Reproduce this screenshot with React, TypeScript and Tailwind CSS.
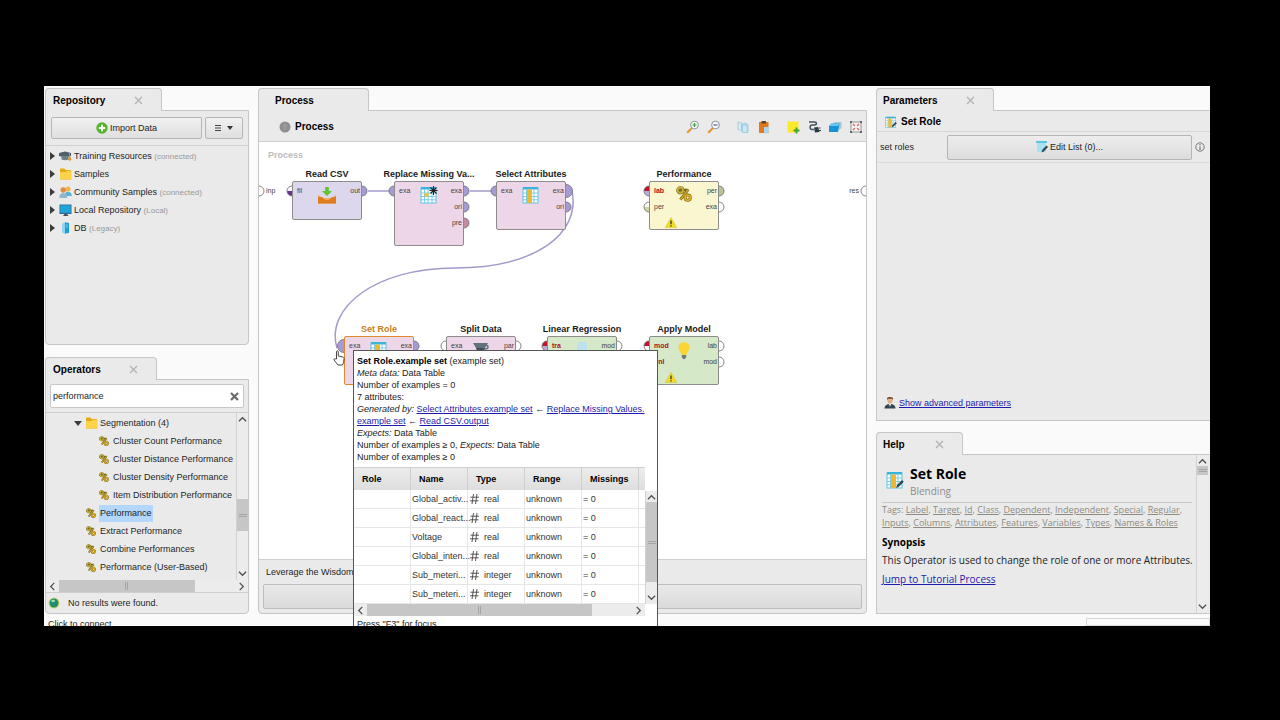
import { useState } from 'react'
import type { ReactNode } from 'react'

type Fill = string | [string, string]

interface Port {
  label: string
  fill: Fill
  bold?: boolean
  big?: boolean
}

interface OperatorNode {
  name: string
  x: number
  y: number
  height: number
  color: string
  selected?: boolean
  warning?: boolean
  inputs: Port[]
  outputs: Port[]
  icon: ReactNode
}

const LILAC = '#a79bd6'
const WHITE = '#ffffff'
const RED = '#c8102e'

/* ---------- icons ---------- */

function CloseIcon({ dark = false }: { dark?: boolean }) {
  return (
    <svg viewBox="0 0 9 9" className="size-[9px]">
      <path d="M1 1l7 7M8 1l-7 7" stroke={dark ? '#6a6a6a' : '#b4b4b4'} strokeWidth={dark ? 2.2 : 1.4} />
    </svg>
  )
}

function PlusIcon() {
  return (
    <svg viewBox="0 0 12 12" className="size-3">
      <circle cx="6" cy="6" r="5.7" fill="#55b52a" />
      <path d="M6 2.8v6.4M2.8 6h6.4" stroke="#fff" strokeWidth="2" />
    </svg>
  )
}

function GraduationIcon() {
  return (
    <svg viewBox="0 0 13 12" className="h-3 w-[13px]">
      <path d="M0 3l6-1.500L12 3v3L6 7.500 0 6z" fill="#4d6068" />
      <path d="M2.500 6v3.500c2 1 5 1 7 0V6z" fill="#6b8088" />
      <path d="M10.500 3v3.500M10.500 6l-1 4h2.500z" stroke="#d9902c" fill="#e9a23b" />
    </svg>
  )
}

function FolderIcon() {
  return (
    <svg viewBox="0 0 13 12" className="h-3 w-[13px]">
      <path d="M1 .5h4.500l1 1.500H12v9.500H1z" fill="#e3ac16" />
      <path d="M1 4h6l1-1.200h4.500v8.700H1z" fill="#fbd249" />
    </svg>
  )
}

function PeopleIcon() {
  return (
    <svg viewBox="0 0 13 12" className="h-3 w-[13px]">
      <circle cx="9" cy="3" r="2.600" fill="#f0b54d" />
      <path d="M5.500 10c0-3 1.500-4.200 3.500-4.200s3.800 1.200 3.800 4.200z" fill="#5ab2da" />
      <circle cx="4.200" cy="4" r="2.700" fill="#e08c3c" />
      <path d="M.3 12c0-3.500 1.600-5 4-5s4 1.500 4 5z" fill="#8fb9cd" />
    </svg>
  )
}

function MonitorIcon() {
  return (
    <svg viewBox="0 0 13 12" className="h-3 w-[13px]">
      <rect x=".5" y=".5" width="12" height="9.500" fill="#2a6f93" />
      <rect x="1.300" y="1.300" width="10.400" height="7.500" fill="#1fa4dc" />
      <path d="M4 12h5.500L8 10H5.500z" fill="#44515a" />
    </svg>
  )
}

function DatabaseIcon() {
  return (
    <svg viewBox="0 0 13 12" className="h-3 w-[13px]">
      <path d="M3 1.500L6 .2v11.600l-3-1z" fill="#8ed4f4" />
      <path d="M6 .2l4 .8v9.800l-4 1z" fill="#1e9bdb" />
      <path d="M6.800 3l2 .3M6.800 5l2 .2" stroke="#c9ecfb" strokeWidth=".7" />
    </svg>
  )
}

function PercentIcon({ size = 'size-[10px]' }: { size?: string }) {
  return (
    <svg viewBox="0 0 14 14" className={size} fill="none">
      <path d="M1.500 3.500h8.800M10.800 3L3.800 12" stroke="#77681c" strokeWidth="2.400" />
      <circle cx="3.800" cy="3.800" r="2.300" stroke="#77681c" strokeWidth="2.600" />
      <circle cx="10.200" cy="10.200" r="2.300" stroke="#77681c" strokeWidth="2.600" />
      <path d="M10.800 3L3.800 12" stroke="#d3a82a" strokeWidth="1.200" />
      <circle cx="3.800" cy="3.800" r="2.300" stroke="#c9b33a" strokeWidth="1.500" />
      <circle cx="10.200" cy="10.200" r="2.300" stroke="#e3ae22" strokeWidth="1.500" />
    </svg>
  )
}

function GridIcon({ size = 'size-4', mark, pen, cell }: { size?: string; mark?: boolean; pen?: boolean; cell?: boolean }) {
  return (
    <svg viewBox="0 0 18 18" className={size}>
      <rect x="1" y="2" width="15" height="15" fill="#fff" stroke="#5cc3e2" />
      <rect x="1" y="1" width="15" height="2.500" fill="#3bb4dc" />
      <path d="M1 7h15M1 10.500h15M1 13.800h15M4.500 3v14M8 3v14M12 3v14" stroke="#6ccae6" strokeWidth=".9" />
      {cell ? (
        <rect x="4.500" y="7" width="4" height="3.500" fill="#f2c230" />
      ) : (
        <rect x="5" y="3.500" width="5" height="13.500" fill="#f0b92d" />
      )}
      {mark && <path d="M13.500 0v9M9.500 4.500h8M10.500 1.500l6 6M16.500 1.500l-6 6" stroke="#222" strokeWidth="1.100" />}
      {pen && <path d="M10 17l1-3 5-5 1.800 1.800-5 5z" fill="#2f4757" />}
    </svg>
  )
}

function ImportTrayIcon() {
  return (
    <svg viewBox="0 0 20 19" className="h-[19px] w-5">
      <path d="M8.200 1h3.600v4H15l-5 5-5-5h3.200z" fill="#5cc531" />
      <path d="M1 9l4 3h10l4-3v8.500H1z" fill="#f3a85a" />
      <path d="M1 10.500l5 1c1 3.500 7 3.500 8 0l5-1v7H1z" fill="#e07c1e" />
    </svg>
  )
}

function FunnelIcon() {
  return (
    <svg viewBox="0 0 18 16" className="h-4 w-[18px]">
      <path d="M1 2h15l-3 5H4z" fill="#62707a" />
      <path d="M4 7h9l-2 6H6z" fill="#424e57" />
      <path d="M13 4c4 0 4 4 0 4" stroke="#62707a" fill="none" strokeWidth="1.500" />
    </svg>
  )
}

function BulbIcon() {
  return (
    <svg viewBox="0 0 14 20" className="h-5 w-3.5">
      <path d="M7 1a5.500 5.500 0 0 1 5.500 5.500c0 3-2.500 4-3 7.500h-5c-.5-3.500-3-4.500-3-7.500A5.500 5.500 0 0 1 7 1z" fill="#fbd534" />
      <path d="M4.800 14h4.400v2.500L7 18.500l-2.200-2z" fill="#6e7b80" />
    </svg>
  )
}

function WarningIcon() {
  return (
    <svg viewBox="0 0 12 11" className="h-[11px] w-3">
      <path d="M6 .5L11.700 10.500H.3z" fill="#f4dc26" stroke="#d9bd1e" strokeWidth=".5" />
      <path d="M6 3.500v3.700M6 8.200v1.300" stroke="#333" strokeWidth="1.300" />
    </svg>
  )
}

function EditIcon() {
  return (
    <svg viewBox="0 0 12 12" className="size-3">
      <rect x="1" y="1" width="9" height="10" fill="#a8e1f2" />
      <rect x="0" y="0" width="11" height="2" fill="#5cc3e2" />
      <path d="M5.500 11.500l.8-2.700L10.500 4.500 12 6l-4.200 4.500z" fill="#2f4757" />
    </svg>
  )
}

function ZoomIcon({ minus = false }: { minus?: boolean }) {
  return (
    <svg viewBox="0 0 14 14" className="size-3.5">
      <path d="M1.200 12.800L6 8" stroke="#e2952c" strokeWidth="2" />
      <circle cx="8.500" cy="5" r="3.900" fill="#f4f8f8" stroke="#8a979c" strokeWidth="1" />
      <path d={minus ? 'M6.500 5h4' : 'M6.500 5h4M8.500 3v4'} stroke={minus ? '#70569c' : '#3f9b3a'} strokeWidth="1.200" />
    </svg>
  )
}

function CopyIcon() {
  return (
    <svg viewBox="0 0 14 14" className="size-3.5">
      <path d="M2 2l3.500 1v7.500L2 9.500z" fill="#dcebf2" stroke="#9bc4d6" strokeWidth=".8" />
      <path d="M6 4l4-1 2 2v7.500H6z" fill="#a9d9ee" stroke="#8cc3da" strokeWidth=".6" />
      <path d="M7 7h3.500M7 9h3.500M7 11h3.500" stroke="#fff" strokeWidth=".8" />
    </svg>
  )
}

function PasteIcon() {
  return (
    <svg viewBox="0 0 14 14" className="size-3.5">
      <rect x="2" y="2" width="9.500" height="11" fill="#e07a1d" />
      <rect x="4.500" y="1" width="4.500" height="2.500" fill="#5b4636" />
      <path d="M7 7h5v4l-2 2.500H7z" fill="#a9d6ea" />
    </svg>
  )
}

function NoteIcon() {
  return (
    <svg viewBox="0 0 14 14" className="size-3.5">
      <path d="M1.500 1.500h11v8l-3 3h-8z" fill="#fde92b" />
      <path d="M10.500 7.500v6M7.500 10.500h6" stroke="#3fa32e" strokeWidth="1.900" />
    </svg>
  )
}

function PlugIcon() {
  return (
    <svg viewBox="0 0 14 14" className="size-3.5">
      <path d="M2 2h5.500c2.500 0 2.500 3 0 3H5c-2.500 0-2.500 4.500 0 4.500h2" fill="none" stroke="#44545c" strokeWidth="1.500" />
      <path d="M7 7.500l4-.5 1.500 5-4.500.5z" fill="#2c383f" />
      <path d="M11.500 8h2M12 10.500h2" stroke="#2c383f" />
    </svg>
  )
}

function LayersIcon() {
  return (
    <svg viewBox="0 0 14 14" className="size-3.5">
      <path d="M4.500 4L7 2h6.500v6L11 10z" fill="#a8c6d3" />
      <path d="M1 6l2.500-2.500h8L10 12H1z" fill="#1794d6" />
      <path d="M1 6l2.500-2.500h8L10 6z" fill="#6cc5ee" />
    </svg>
  )
}

function FitIcon() {
  return (
    <svg viewBox="0 0 14 14" className="size-3.5">
      <rect x="2" y="2" width="10" height="10" fill="#f6f1f1" stroke="#7d8488" strokeWidth=".8" />
      <path d="M1 1h2v2H1zM11 1h2v2h-2zM1 11h2v2H1zM11 11h2v2h-2z" fill="#5d666b" />
      <path d="M4 4l1.800 1.800M10 4L8.200 5.800M4 10l1.800-1.800M10 10L8.200 8.200" stroke="#d25a5a" strokeWidth="1.200" />
    </svg>
  )
}

function PersonIcon() {
  return (
    <svg viewBox="0 0 12 13" className="h-[13px] w-3">
      <path d="M.5 12.500c0-3 2-4.500 5.500-4.500s5.500 1.500 5.500 4.500z" fill="#36454d" />
      <rect x="3.500" y="1.500" width="5" height="6" rx="2" fill="#e5b184" />
      <path d="M3 4V2.500C3 .5 9 .5 9 2.500V4L8 2.800H4z" fill="#6b4a2c" />
      <path d="M5 8h2l-1 3z" fill="#fff" />
    </svg>
  )
}

function Chevron({ dir }: { dir: 'up' | 'down' | 'left' | 'right' }) {
  const paths = {
    up: 'M1 7l4-4 4 4',
    down: 'M1 3l4 4 4-4',
    left: 'M7 1L3 5l4 4',
    right: 'M3 1l4 4-4 4',
  }
  return (
    <svg viewBox="0 0 10 10" className="size-[9px] shrink-0">
      <path d={paths[dir]} fill="none" stroke="#505050" strokeWidth="1.400" />
    </svg>
  )
}

/* ---------- shared pieces ---------- */

function Tab({ title, width, closable = true }: { title: string; width: string; closable?: boolean }) {
  return (
    <div
      className={`relative z-10 -mb-px flex h-[23px] shrink-0 items-center justify-between rounded-t-sm border border-b-0 border-[#c6c6c6] bg-[#eaeaea] pt-px pr-[18px] text-[10px] font-bold text-black ${width}`}
    >
      <h2>{title}</h2>
      {closable && (
        <button aria-label={`Close ${title}`}>
          <CloseIcon />
        </button>
      )}
    </div>
  )
}

function VerticalBar({ thumb }: { thumb: string }) {
  return (
    <div className="flex w-3 shrink-0 flex-col items-center border-l border-[#d2d2d2] bg-[#ececec] py-0.5">
      <Chevron dir="up" />
      <div className="flex w-full flex-1 flex-col">
        <div className={`flex w-full flex-col items-center justify-center gap-px bg-[#c6c6c6] ${thumb}`}>
          <span className="h-px w-2 bg-[#a4a4a4]" />
          <span className="h-px w-2 bg-[#a4a4a4]" />
        </div>
      </div>
      <Chevron dir="down" />
    </div>
  )
}

function HorizontalBar({ thumb }: { thumb: string }) {
  return (
    <div className="flex h-3 shrink-0 items-center bg-[#ececec] px-0.5">
      <Chevron dir="left" />
      <div className="mx-0.5 h-full flex-1">
        <div className={`flex h-full items-center justify-center gap-px bg-[#c6c6c6] ${thumb}`}>
          <span className="h-2 w-px bg-[#a4a4a4]" />
          <span className="h-2 w-px bg-[#a4a4a4]" />
        </div>
      </div>
      <Chevron dir="right" />
    </div>
  )
}

/* ---------- left column ---------- */

const repositories = [
  { name: 'Training Resources', note: '(connected)', icon: <GraduationIcon /> },
  { name: 'Samples', note: '', icon: <FolderIcon /> },
  { name: 'Community Samples', note: '(connected)', icon: <PeopleIcon /> },
  { name: 'Local Repository', note: '(Local)', icon: <MonitorIcon /> },
  { name: 'DB', note: '(Legacy)', icon: <DatabaseIcon /> },
]

function RepositoryPanel() {
  return (
    <section className="flex min-h-0 flex-1 flex-col">
      <Tab title="Repository" width="w-[117px] pl-[7px]" />
      <div className="flex-1 rounded-b-sm border border-[#c6c6c6] bg-[#eaeaea]">
        <div className="flex gap-[3px] border-b border-[#cfcfcf] px-[5px] py-1.5">
          <button className="flex h-[22px] flex-1 items-center justify-center gap-0.5 rounded-xs border border-[#b5b5b5] bg-linear-to-b from-[#f1f1f1] to-[#dfdfdf]">
            <PlusIcon />
            Import Data
          </button>
          <button
            aria-label="Repository menu"
            className="flex h-[22px] w-[38px] items-center justify-center rounded-xs border border-[#b5b5b5] bg-linear-to-b from-[#f1f1f1] to-[#dfdfdf]"
          >
            <svg viewBox="0 0 18 8" className="h-2 w-[18px]">
              <path d="M0 1.500h6M0 4h6M0 6.500h6" stroke="#444" />
              <path d="M12 2h6l-3 4z" fill="#333" />
            </svg>
          </button>
        </div>
        <ul className="pt-px">
          {repositories.map((r) => (
            <li key={r.name} className="flex h-[18px] items-center pl-1">
              <svg viewBox="0 0 5 8" className="mr-1 h-2 w-[5px]">
                <path d="M0 0l5 4-5 4z" fill="#3c3c3c" />
              </svg>
              {r.icon}
              <span className="ml-0.5 whitespace-nowrap">
                {r.name} <span className="text-[8px] text-[#999]">{r.note}</span>
              </span>
            </li>
          ))}
        </ul>
      </div>
    </section>
  )
}

const operators = [
  { name: 'Cluster Count Performance', nested: true },
  { name: 'Cluster Distance Performance', nested: true },
  { name: 'Cluster Density Performance', nested: true },
  { name: 'Item Distribution Performance', nested: true },
  { name: 'Performance', nested: false },
  { name: 'Extract Performance', nested: false },
  { name: 'Combine Performances', nested: false },
  { name: 'Performance (User-Based)', nested: false },
]

function OperatorsPanel() {
  const [query, setQuery] = useState('performance')

  return (
    <section className="flex min-h-0 flex-1 flex-col">
      <Tab title="Operators" width="w-[112px] pl-[7px]" />
      <div className="flex min-h-0 flex-1 flex-col rounded-b-sm border border-[#c6c6c6] bg-[#eaeaea]">
        <div className="border-b border-[#cfcfcf] px-1 pt-1 pb-1">
          <div className="flex h-6 items-center rounded-xs border border-[#c6c6c6] bg-white pr-1">
            <input
              aria-label="Search operators"
              value={query}
              onChange={(e) => setQuery(e.target.value)}
              className="h-full min-w-0 flex-1 pl-0.5 outline-none"
            />
            <button aria-label="Clear search" onClick={() => setQuery('')}>
              <CloseIcon dark />
            </button>
          </div>
        </div>
        <div className="flex min-h-0 flex-1">
          <ul className="min-w-0 flex-1 overflow-hidden pt-px">
            <li className="flex h-[18px] items-center pl-7">
              <svg viewBox="0 0 8 5" className="mr-[3px] h-[5px] w-2">
                <path d="M0 0h8L4 5z" fill="#3c3c3c" />
              </svg>
              <FolderIcon />
              <span className="ml-0.5">Segmentation (4)</span>
            </li>
            {operators.map((op) => (
              <li key={op.name} className={`flex h-[18px] items-center whitespace-nowrap ${op.nested ? 'pl-[53px]' : 'pl-10'}`}>
                <PercentIcon />
                <span
                  className={`ml-[3px] flex h-[17px] items-center px-px ${op.name === 'Performance' ? 'bg-[#b3d7ff]' : ''}`}
                >
                  {op.name}
                </span>
              </li>
            ))}
          </ul>
          <VerticalBar thumb="mt-[75px] h-8" />
        </div>
        <HorizontalBar thumb="w-[77%]" />
        <div className="flex h-[21px] shrink-0 items-center gap-2 border-t border-[#cfcfcf] pl-0.5">
          <svg viewBox="0 0 12 12" className="size-3">
            <circle cx="6" cy="6" r="5.500" fill="#d8d46a" />
            <circle cx="6" cy="6" r="4.500" fill="#1f8f6e" />
            <path d="M3 4c2-2 4-1 4 0S4 6 3 4z" fill="#9fe0c0" />
          </svg>
          No results were found.
        </div>
      </div>
    </section>
  )
}

/* ---------- process canvas ---------- */

const nodes: OperatorNode[] = [
  {
    name: 'Read CSV',
    x: 33,
    y: 39,
    height: 39,
    color: '#dcd7ec',
    inputs: [{ label: 'fil', fill: [WHITE, '#6a2f92'] }],
    outputs: [{ label: 'out', fill: LILAC }],
    icon: <ImportTrayIcon />,
  },
  {
    name: 'Replace Missing Va...',
    x: 135,
    y: 39,
    height: 65,
    color: '#edd6e8',
    inputs: [{ label: 'exa', fill: LILAC }],
    outputs: [
      { label: 'exa', fill: LILAC },
      { label: 'ori', fill: LILAC },
      { label: 'pre', fill: '#c58ba6' },
    ],
    icon: <GridIcon size="size-[18px]" mark cell />,
  },
  {
    name: 'Select Attributes',
    x: 237,
    y: 39,
    height: 49,
    color: '#edd6e8',
    inputs: [{ label: 'exa', fill: LILAC }],
    outputs: [
      { label: 'exa', fill: LILAC, big: true },
      { label: 'ori', fill: LILAC },
    ],
    icon: <GridIcon size="size-[18px]" />,
  },
  {
    name: 'Performance',
    x: 390,
    y: 39,
    height: 49,
    color: '#faf6cf',
    warning: true,
    inputs: [
      { label: 'lab', fill: [RED, '#b9a8dc'], bold: true },
      { label: 'per', fill: [WHITE, '#d2d2a0'] },
    ],
    outputs: [
      { label: 'per', fill: '#bdbf94' },
      { label: 'exa', fill: WHITE },
    ],
    icon: <PercentIcon size="size-4" />,
  },
  {
    name: 'Set Role',
    x: 85,
    y: 194,
    height: 49,
    color: '#edd6e8',
    selected: true,
    inputs: [{ label: 'exa', fill: LILAC, big: true }],
    outputs: [{ label: 'exa', fill: LILAC }],
    icon: <GridIcon size="size-[18px]" />,
  },
  {
    name: 'Split Data',
    x: 187,
    y: 194,
    height: 49,
    color: '#edd6e8',
    inputs: [{ label: 'exa', fill: WHITE }],
    outputs: [{ label: 'par', fill: WHITE }],
    icon: <FunnelIcon />,
  },
  {
    name: 'Linear Regression',
    x: 288,
    y: 194,
    height: 49,
    color: '#d5e8c8',
    inputs: [{ label: 'tra', fill: [RED, '#b9a8dc'], bold: true }],
    outputs: [{ label: 'mod', fill: WHITE }],
    icon: (
      <svg viewBox="0 0 12 16" className="h-4 w-3">
        <rect x="1" y="1" width="10" height="14" rx="3" fill="#b9e2ee" />
      </svg>
    ),
  },
  {
    name: 'Apply Model',
    x: 390,
    y: 194,
    height: 49,
    color: '#d5e8c8',
    warning: true,
    inputs: [
      { label: 'mod', fill: [RED, WHITE], bold: true },
      { label: 'unl', fill: [RED, WHITE], bold: true },
    ],
    outputs: [
      { label: 'lab', fill: WHITE },
      { label: 'mod', fill: WHITE },
    ],
    icon: <BulbIcon />,
  },
]

function PortShape({ fill, side, big }: { fill: Fill; side: 'left' | 'right'; big?: boolean }) {
  const [top, bottom] = Array.isArray(fill) ? fill : [fill, fill]
  const r = big ? 6.5 : 5
  const sweep = side === 'left' ? 0 : 1
  const tip = side === 'left' ? 7 - r : r
  const base = side === 'left' ? 7 : 0
  return (
    <svg viewBox="0 0 7 14" className="h-3.5 w-[7px]">
      <path d={`M${base} ${7 - r}A${r} ${r} 0 0 ${sweep} ${tip} 7H${base}z`} fill={top} />
      <path d={`M${base} ${7 + r}A${r} ${r} 0 0 ${1 - sweep} ${tip} 7H${base}z`} fill={bottom} />
      <path d={`M${base} ${7 - r}A${r} ${r} 0 0 ${sweep} ${base} ${7 + r}`} fill="none" stroke="#777" strokeWidth=".9" />
    </svg>
  )
}

function ProcessNode({ node }: { node: OperatorNode }) {
  return (
    <div
      className={`absolute w-[70px] rounded-xs border ${node.selected ? 'border-[#e08a2c]' : 'border-[#8c8c8c]'}`}
      style={{ left: node.x, top: node.y, height: node.height, backgroundColor: node.color }}
    >
      <h3
        className={`absolute bottom-full left-1/2 mb-0.5 -translate-x-1/2 text-[9px] leading-3 font-bold whitespace-nowrap ${node.selected ? 'text-[#c8801a]' : 'text-[#1a1a1a]'}`}
      >
        {node.name}
      </h3>
      <ul className="absolute top-px -left-2 text-[7px]">
        {node.inputs.map((p) => (
          <li key={p.label} className={`flex h-4 items-center gap-[5px] ${p.bold ? 'font-bold text-[#b0101c]' : 'text-[#444]'}`}>
            <PortShape fill={p.fill} side="left" big={p.big} />
            {p.label}
          </li>
        ))}
      </ul>
      <ul className="absolute top-px -right-2 text-[7px] text-[#444]">
        {node.outputs.map((p) => (
          <li key={p.label} className="flex h-4 items-center justify-end gap-0.5">
            {p.label}
            <PortShape fill={p.fill} side="right" big={p.big} />
          </li>
        ))}
      </ul>
      <div className="flex justify-center pt-1">{node.icon}</div>
      {node.warning && (
        <div className="absolute bottom-px left-[15px]">
          <WarningIcon />
        </div>
      )}
    </div>
  )
}

const toolbar = [
  { label: 'Zoom in', icon: <ZoomIcon />, space: '' },
  { label: 'Zoom out', icon: <ZoomIcon minus />, space: 'ml-[7px]' },
  { label: 'Copy', icon: <CopyIcon />, space: 'ml-[15px]' },
  { label: 'Paste', icon: <PasteIcon />, space: 'ml-[7px]' },
  { label: 'Add note', icon: <NoteIcon />, space: 'ml-[15px]' },
  { label: 'Auto wire', icon: <PlugIcon />, space: 'ml-[7px]' },
  { label: 'Layers', icon: <LayersIcon />, space: 'ml-[7px]' },
  { label: 'Fit', icon: <FitIcon />, space: 'ml-[7px]' },
]

function ProcessPanel() {
  return (
    <section className="flex min-w-0 flex-1 flex-col">
      <Tab title="Process" width="w-[111px] pl-4" closable={false} />
      <div className="flex min-h-0 flex-1 flex-col rounded-b-sm border border-[#c6c6c6] bg-[#eaeaea]">
        <div className="flex h-[31px] shrink-0 items-center border-b border-[#cfcfcf] pt-px pr-[3px] pl-5 text-[10px] font-bold">
          <svg viewBox="0 0 12 12" className="mr-1 size-3">
            <circle cx="6" cy="6" r="5.500" fill="#8f8f8f" />
            <path d="M6 9V3.500M4 5.500l2-2 2 2" stroke="#a8a8a8" fill="none" />
          </svg>
          <h3 className="flex-1 text-black">Process</h3>
          {toolbar.map((b) => (
            <button key={b.label} aria-label={b.label} className={b.space}>
              {b.icon}
            </button>
          ))}
        </div>
        <div className="relative min-h-0 flex-1 overflow-hidden bg-white">
          <div className="px-[9px] pt-[7px] leading-3 font-bold text-[#bcbcbc]">Process</div>
          <svg className="absolute inset-0 size-full" fill="none" stroke="#a39ac9" strokeWidth="1.500">
            <path d="M109 49h22M211 49h22" />
            <path d="M313 49C322 92 276 126 196 126C116 126 66 166 78 206" />
          </svg>
          <div className="absolute top-[41px] left-0 flex h-4 items-center text-[7px] text-[#444]">
            <PortShape fill={WHITE} side="right" />
            inp
          </div>
          <div className="absolute top-[41px] right-0 flex h-4 items-center text-[7px] text-[#444]">
            res
            <PortShape fill={WHITE} side="left" />
          </div>
          {nodes.map((n) => (
            <ProcessNode key={n.name} node={n} />
          ))}
        </div>
        <div className="shrink-0 border-t border-[#cfcfcf] px-1 pb-1">
          <p className="pl-[3px] leading-6">Leverage the Wisdom</p>
          <button
            aria-label="Activate recommendations"
            className="block h-[25px] w-full rounded-xs border border-[#bdbdbd] bg-linear-to-b from-[#e9e9e9] to-[#dbdbdb]"
          />
        </div>
      </div>
    </section>
  )
}

/* ---------- right column ---------- */

function ParametersPanel() {
  return (
    <section className="flex min-h-0 flex-1 flex-col">
      <Tab title="Parameters" width="w-[118px] pl-1.5" />
      <div className="flex flex-1 flex-col border border-r-0 border-[#c6c6c6] bg-[#eaeaea]">
        <div className="flex h-[21px] items-center gap-1 border-b border-[#d6d6d6] pt-0.5 pl-2 text-[10px] font-bold text-black">
          <GridIcon size="size-3" pen />
          Set Role
        </div>
        <div className="flex h-[31px] items-center border-b border-[#dcdcdc] pr-[5px] pl-[3px]">
          <label htmlFor="set-roles" className="w-[67px]">
            set roles
          </label>
          <button
            id="set-roles"
            className="flex h-[25px] flex-1 items-center justify-center gap-0.5 rounded-xs border border-[#b5b5b5] bg-linear-to-b from-[#ededed] to-[#dddddd]"
          >
            <EditIcon />
            Edit List (0)...
          </button>
          <svg viewBox="0 0 10 10" className="ml-[3px] size-2.5">
            <circle cx="5" cy="5" r="4.200" fill="none" stroke="#777" />
            <path d="M5 2v1.200M5 4.200V8" stroke="#777" strokeWidth="1.200" />
          </svg>
        </div>
        <div className="mt-auto flex items-center gap-[3px] pb-[11px] pl-[7px]">
          <PersonIcon />
          <a href="#advanced" className="text-[#1c1cae] underline">
            Show advanced parameters
          </a>
        </div>
      </div>
    </section>
  )
}

const tags = [
  'Label', 'Target', 'Id', 'Class', 'Dependent', 'Independent', 'Special', 'Regular',
  'Inputs', 'Columns', 'Attributes', 'Features', 'Variables', 'Types', 'Names & Roles',
]

function HelpPanel() {
  return (
    <section className="flex h-[182px] shrink-0 flex-col">
      <Tab title="Help" width="w-[87px] pl-1.5" />
      <div className="flex min-h-0 flex-1 border border-r-0 border-[#c6c6c6] bg-[#eaeaea] pr-0.5">
        <div className="min-w-0 flex-1 overflow-hidden pt-2 pr-1 pl-[5px] font-['Open_Sans',sans-serif]">
          <div className="flex items-center gap-1.5 border-b border-[#c8c8c8] pb-[5px] pl-1">
            <GridIcon size="size-[18px]" pen />
            <div>
              <h3 className="text-[14px] leading-[22px] font-bold text-black">Set Role</h3>
              <p className="text-[10px] leading-3 text-[#8a8a8a]">Blending</p>
            </div>
          </div>
          <p className="text-[9px] leading-[13px] text-[#8f8a80]">
            Tags:{' '}
            {tags.map((tag, i) => (
              <span key={tag}>
                <a href={`#${tag}`} className="underline">
                  {tag}
                </a>
                {i < tags.length - 1 && ', '}
              </span>
            ))}
          </p>
          <h4 className="pt-[7px] text-[10px] leading-[13px] font-bold text-black">Synopsis</h4>
          <p className="pt-1 text-[10px] leading-[15px] whitespace-nowrap text-[#222]">
            This Operator is used to change the role of one or more Attributes.
          </p>
          <a href="#tutorial" className="mt-1 block text-[10px] leading-[15px] text-[#1c1cae] underline">
            Jump to Tutorial Process
          </a>
        </div>
        <VerticalBar thumb="h-[9px]" />
      </div>
    </section>
  )
}

/* ---------- port tooltip ---------- */

const attributes = [
  ['Global_activ...', 'real'],
  ['Global_react...', 'real'],
  ['Voltage', 'real'],
  ['Global_inten...', 'real'],
  ['Sub_meteri...', 'integer'],
  ['Sub_meteri...', 'integer'],
]

function PortTooltip() {
  const link = 'text-[#1c1cae] underline'
  const cell = 'border-r border-b border-[#e6e6e6]'
  return (
    <div role="tooltip" className="absolute top-[264px] left-[309px] z-20 w-[305px] border border-[#555] bg-white">
      <div className="px-[3px] py-1 leading-3 text-[#222]">
        <p>
          <b className="text-black">Set Role.example set</b> (example set)
        </p>
        <p>
          <i>Meta data:</i> Data Table
        </p>
        <p>Number of examples = 0</p>
        <p>7 attributes:</p>
        <p>
          <i>Generated by:</i>{' '}
          <a href="#select" className={link}>
            Select Attributes.example set
          </a>{' '}
          ←{' '}
          <a href="#replace" className={link}>
            Replace Missing Values.
            <wbr />
            example set
          </a>{' '}
          ←{' '}
          <a href="#read" className={link}>
            Read CSV.output
          </a>
        </p>
        <p>
          <i>Expects:</i> Data Table
        </p>
        <p>
          Number of examples ≥ 0, <i>Expects:</i> Data Table
        </p>
        <p>Number of examples ≥ 0</p>
      </div>
      <div className="flex">
        <div className="min-w-0 flex-1">
          <table className="w-full table-fixed border-separate border-spacing-0 text-[#333]">
            <thead>
              <tr className="h-[23px] text-left text-black">
                {['Role', 'Name', 'Type', 'Range', 'Missings'].map((h) => (
                  <th
                    key={h}
                    className="w-[57px] border-t border-r border-[#cfcfcf] bg-linear-to-b from-[#ececec] to-[#dedede] pl-2"
                  >
                    {h}
                  </th>
                ))}
                <th className="border-t border-[#cfcfcf] bg-linear-to-b from-[#ececec] to-[#dedede]" aria-label="More" />
              </tr>
            </thead>
            <tbody>
              {attributes.map(([name, type], i) => (
                <tr key={i} className="h-[19px]">
                  <td className={cell} />
                  <td className={`pl-px whitespace-nowrap ${cell}`}>{name}</td>
                  <td className={`pl-0.5 ${cell}`}>
                    <span className="flex items-center gap-[5px]">
                      <svg viewBox="0 0 9 10" className="h-2.5 w-[9px]">
                        <path d="M3.500 0L2 10M7 0L5.500 10M.5 3.200h8.500M0 6.800h8.500" stroke="#444" strokeWidth=".9" />
                      </svg>
                      {type}
                    </span>
                  </td>
                  <td className={`pl-px ${cell}`}>unknown</td>
                  <td className={`pl-px ${cell}`}>= 0</td>
                  <td className="border-b border-[#e6e6e6]" />
                </tr>
              ))}
            </tbody>
          </table>
        </div>
        <div className="flex pt-6">
          <VerticalBar thumb="h-[80px]" />
        </div>
      </div>
      <div className="pr-3">
        <HorizontalBar thumb="w-[85%]" />
      </div>
      <p className="px-[3px] leading-4">Press "F3" for focus.</p>
    </div>
  )
}

export default function App() {
  return (
    <div className="flex h-screen bg-black pt-[86px] pr-[70px] pb-[94px] pl-11 font-['Liberation_Sans',Arial,sans-serif] text-[9px] leading-3 text-[#1e1e1e]">
      <div className="relative flex min-w-0 flex-1 flex-col overflow-hidden bg-[#fafafa]">
        <div className="flex min-h-0 flex-1 gap-[9px] pt-0.5 pl-px">
          <div className="flex w-[204px] shrink-0 flex-col gap-3">
            <RepositoryPanel />
            <OperatorsPanel />
          </div>
          <ProcessPanel />
          <div className="flex w-[334px] shrink-0 flex-col gap-[11px]">
            <ParametersPanel />
            <HelpPanel />
          </div>
        </div>
        <footer className="flex h-3 shrink-0 justify-between pt-1 pl-1">
          <span>Click to connect.</span>
          <div className="w-[124px] border border-[#d8d8d8]" />
        </footer>
        <PortTooltip />
        <svg viewBox="0 0 12 16" className="absolute top-[264px] left-[289px] z-30 h-4 w-3">
          <path
            d="M3.500 9V1.800c0-1.300 1.800-1.300 1.800 0V6l4.500 1c1 .3 1.400.8 1.300 2l-.6 3.500L9.500 15H5L1 10c-.5-1 .8-1.800 1.500-1z"
            fill="#fff"
            stroke="#333"
            strokeWidth=".9"
          />
        </svg>
      </div>
    </div>
  )
}
